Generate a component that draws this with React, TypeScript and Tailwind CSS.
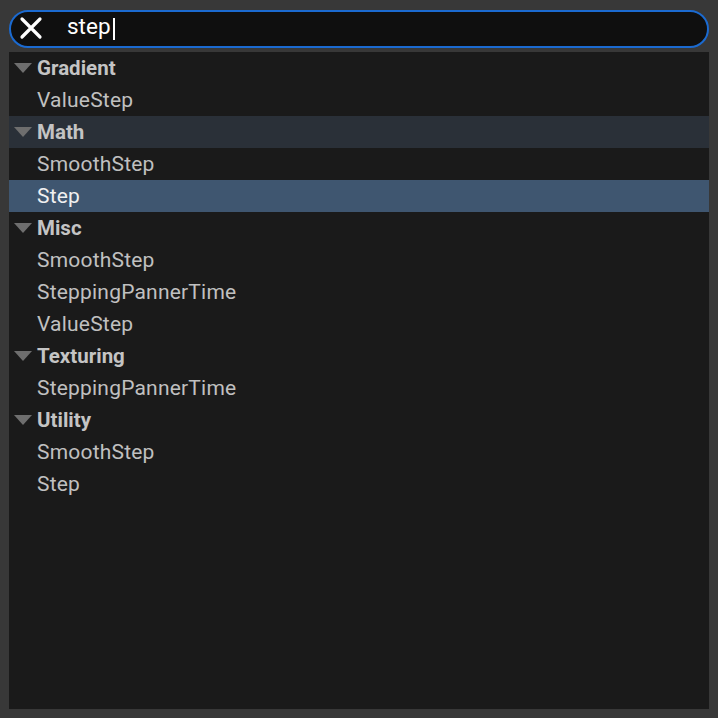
import React from 'react';

interface Group {
  name: string;
  items: string[];
  hover?: boolean;
}

const groups: Group[] = [
  { name: 'Gradient', items: ['ValueStep'] },
  { name: 'Math', items: ['SmoothStep', 'Step'], hover: true },
  { name: 'Misc', items: ['SmoothStep', 'SteppingPannerTime', 'ValueStep'] },
  { name: 'Texturing', items: ['SteppingPannerTime'] },
  { name: 'Utility', items: ['SmoothStep', 'Step'] },
];

const Caret = () => (
  <svg width="18" height="10" viewBox="0 0 18 10" className="shrink-0">
    <polygon points="0,0 18,0 9,10" fill="#6e6e6e" />
  </svg>
);

export default function App() {
  return (
    <div
      className="w-[718px] h-[718px] bg-[#383838] flex flex-col"
      style={{ fontFamily: 'Roboto, "Noto Sans", sans-serif' }}
    >
      {/* Search box */}
      <div className="mx-[9px] mt-[10px] h-[38px] rounded-full border-2 border-[#1b6ad0] bg-[#0f0f0f] flex items-center">
        <svg width="24" height="24" viewBox="0 0 24 24" className="ml-[8px] mb-[2px]">
          <path d="M3 3 L21 21 M21 3 L3 21" stroke="#ffffff" strokeWidth="3.2" strokeLinecap="round" />
        </svg>
        <span className="ml-[24px] mb-[5px] text-[22.5px] text-white leading-none">step</span>
        <span className="ml-[2px] w-[2px] h-[22px] bg-white" />
      </div>

      {/* Results */}
      <div className="mx-[9px] mt-[4px] mb-[9px] flex-1 bg-[#1a1a1a] flex flex-col">
        {groups.map((g) => (
          <div key={g.name} className="flex flex-col">
            <div className={`h-[32px] flex items-center pl-[5px] gap-[5px] ${g.hover ? 'bg-[#2a3038]' : ''}`}>
              <Caret />
              <span className="text-[20.5px] font-bold text-[#c4c4c4]">{g.name}</span>
            </div>
            {g.items.map((it) => {
              const selected = g.name === 'Math' && it === 'Step';
              return (
                <div
                  key={it}
                  className={`h-[32px] flex items-center pl-[28px] pt-[2px] text-[21px] tracking-[0.2px] ${selected ? 'bg-[#3f5670] text-[#f0f0f0]' : 'text-[#c0c0c0]'}`}
                >
                  {it}
                </div>
              );
            })}
          </div>
        ))}
      </div>
    </div>
  );
}
